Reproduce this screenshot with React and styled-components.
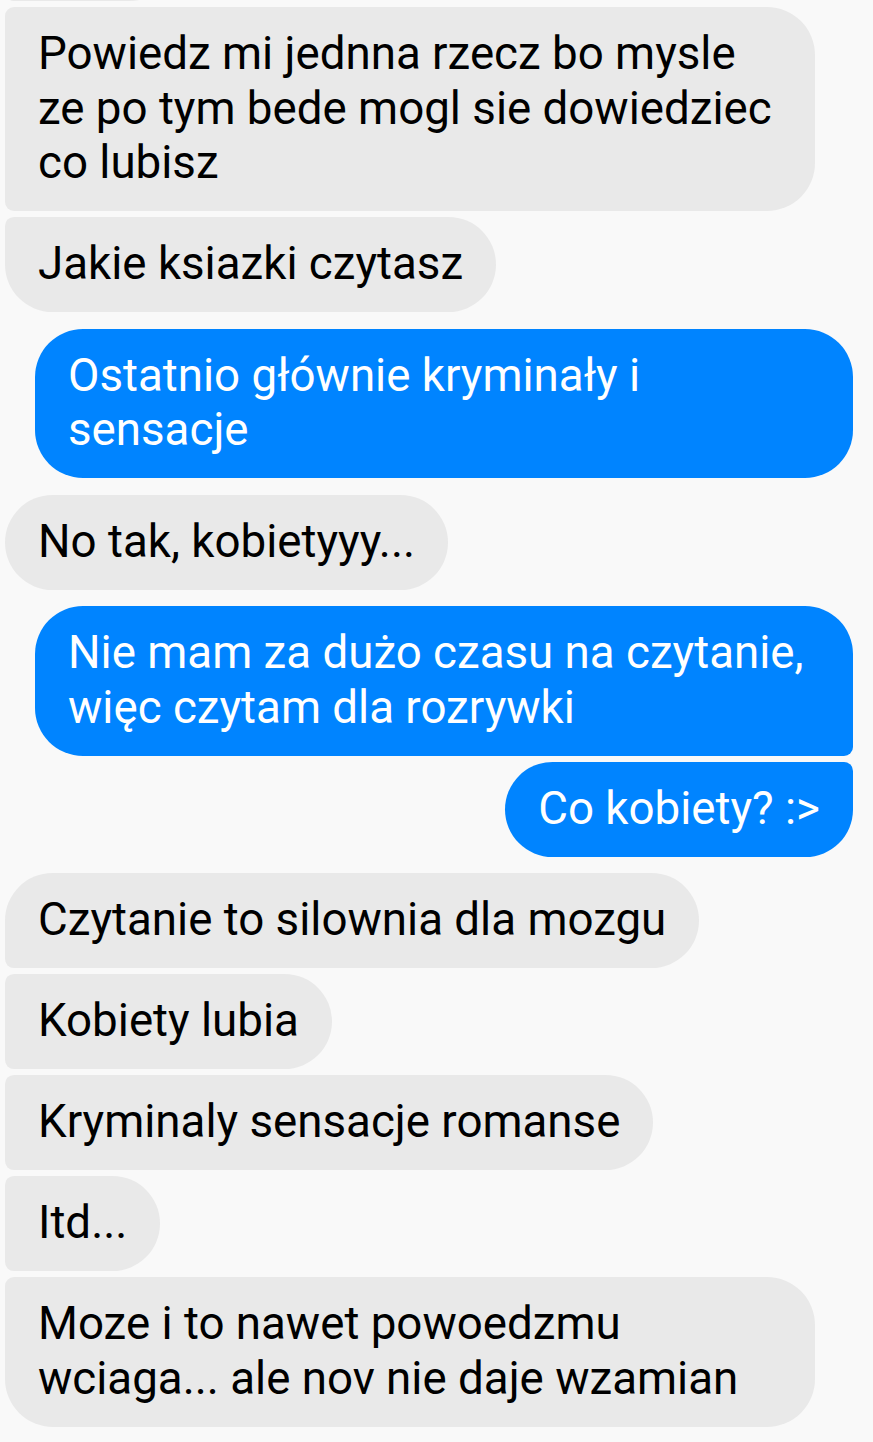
import React from "react";
import styled, { createGlobalStyle, css } from "styled-components";

const GlobalStyle = createGlobalStyle`
  html, body {
    margin: 0;
    padding: 0;
    background: #f9f9f9;
    overflow: hidden;
  }
`;

const BIG = "48px";
const SMALL = "9px";

const Screen = styled.div`
  height: 100vh;
  overflow: hidden;
  background: #f9f9f9;
  font-family: Roboto, "Noto Sans", sans-serif;
`;

const Thread = styled.div`
  display: flex;
  flex-direction: column;
  padding: 0 20px 0 5px;
  /* list is scrolled: only the bottom of the previous bubble shows */
  margin-top: -94px;
`;

const Row = styled.div`
  display: flex;
  justify-content: ${(p) => (p.$mine ? "flex-end" : "flex-start")};
  margin-top: ${(p) => p.$gap}px;
`;

const Bubble = styled.div`
  box-sizing: border-box;
  max-width: ${(p) => (p.$mine ? "818px" : "810px")};
  padding: 20.25px 33px;
  font-size: 45.7px;
  line-height: 54.5px;
  color: ${(p) => (p.$mine ? "#ffffff" : "#000000")};
  background: ${(p) => (p.$mine ? "#0084ff" : "#e9e9e9")};
  ${(p) =>
    p.$mine
      ? css`
          border-radius: ${BIG} ${p.$first ? BIG : SMALL} ${p.$last ? BIG : SMALL} ${BIG};
        `
      : css`
          border-radius: ${p.$first ? BIG : SMALL} ${BIG} ${BIG} ${p.$last ? BIG : SMALL};
        `}
  ${(p) =>
    p.$peek &&
    css`
      /* scrolled out of view, only its edge peeks in */
      width: ${p.$peek}px;
      height: 95px;
    `}
`;

const messages = [
  { mine: false, peek: 172 },
  { mine: false, text: "Powiedz mi jednna rzecz bo mysle ze po tym bede mogl sie dowiedziec co lubisz" },
  { mine: false, text: "Jakie ksiazki czytasz" },
  { mine: true, text: "Ostatnio głównie kryminały i sensacje" },
  { mine: false, text: "No tak, kobietyyy..." },
  { mine: true, text: "Nie mam za dużo czasu na czytanie, więc czytam dla rozrywki" },
  { mine: true, text: "Co kobiety? :>" },
  { mine: false, text: "Czytanie to silownia dla mozgu" },
  { mine: false, text: "Kobiety lubia" },
  { mine: false, text: "Kryminaly sensacje romanse" },
  { mine: false, text: "Itd..." },
  { mine: false, text: "Moze i to nawet powoedzmu wciaga... ale nov nie daje wzamian" },
  { mine: true, peek: 818 },
];

export default function App() {
  return (
    <Screen>
      <GlobalStyle />
      <Thread>
        {messages.map((m, i) => {
          const prev = messages[i - 1];
          const next = messages[i + 1];
          const first = !prev || prev.mine !== m.mine;
          const last = !next || next.mine !== m.mine;
          // the first visible bubble continues a group from above
          const isFirst = i === 0 ? false : first;
          return (
            <Row key={i} $mine={m.mine} $gap={i === 0 ? 0 : first ? 16.5 : 6}>
              <Bubble $mine={m.mine} $first={isFirst} $last={last} $peek={m.peek}>
                {m.text}
              </Bubble>
            </Row>
          );
        })}
      </Thread>
    </Screen>
  );
}
